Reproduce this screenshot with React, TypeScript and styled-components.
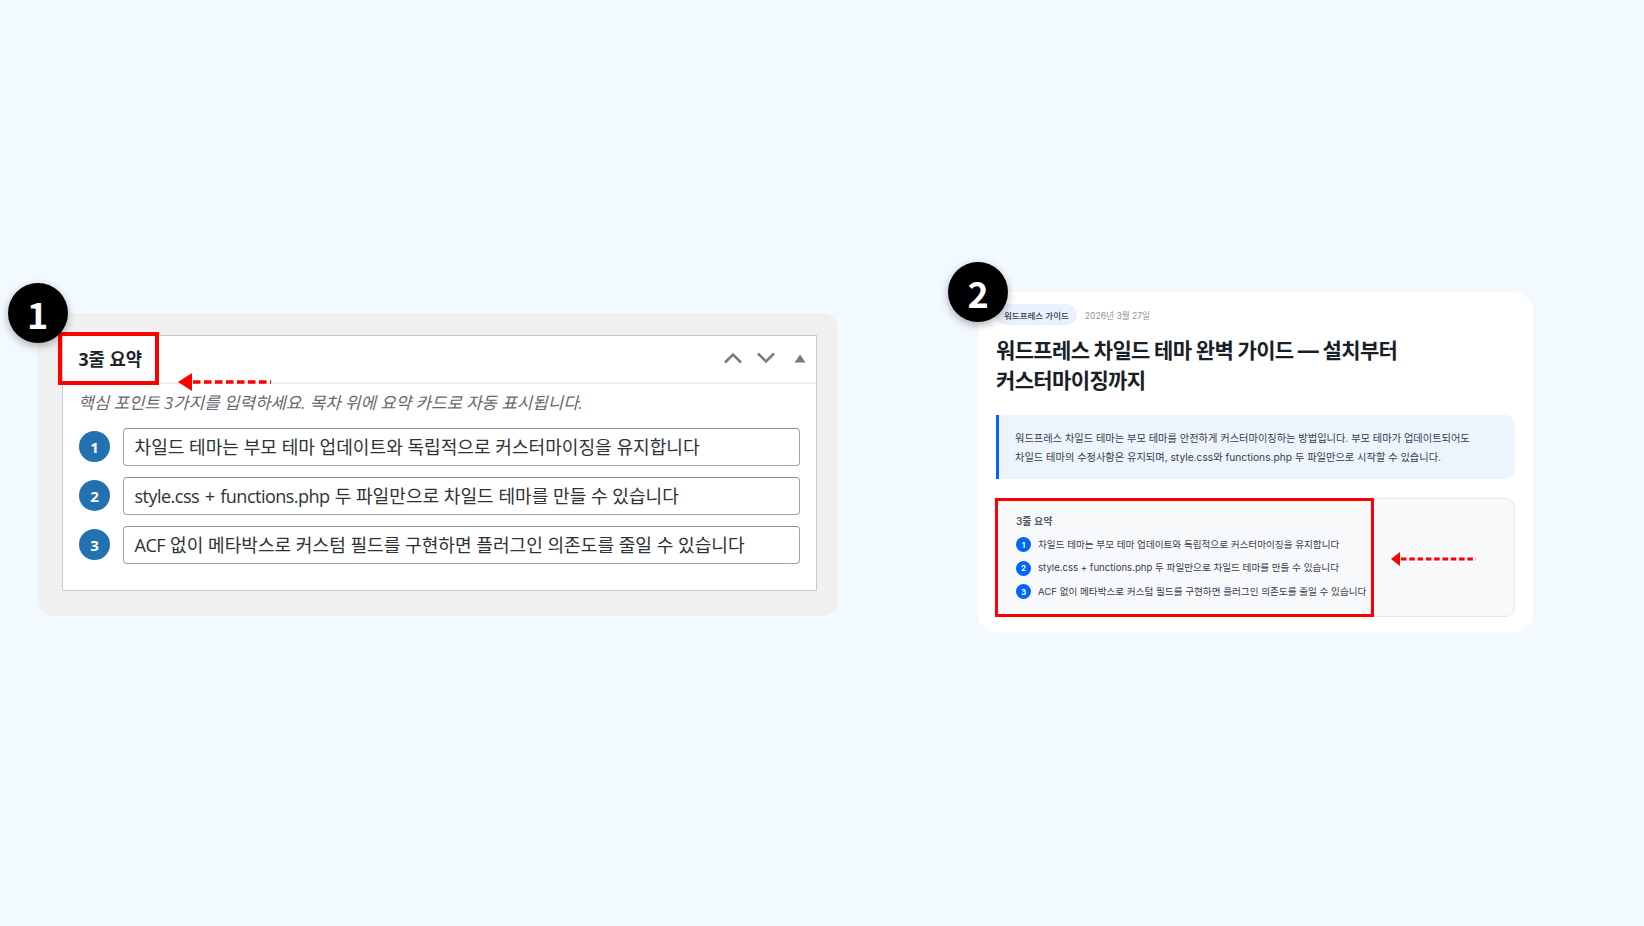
import React from "react";
import styled, { createGlobalStyle } from "styled-components";

const Global = createGlobalStyle`
  html, body { margin: 0; padding: 0; background: #f2f9ff; }
  * { box-sizing: border-box; }
`;

const Page = styled.div`
  width: 1644px;
  height: 926px;
  overflow: hidden;
  display: flex;
  align-items: flex-start;
  padding: 292px 0 0 38px;
  gap: 140px;
`;

const Figure = styled.section<{ $top?: number }>`
  position: relative;
  margin-top: ${(p) => p.$top ?? 0}px;
`;

const Marker = styled.div<{ $left: number; $top: number }>`
  position: absolute;
  left: ${(p) => p.$left}px;
  top: ${(p) => p.$top}px;
  width: 60px;
  height: 60px;
  border-radius: 50%;
  background: #000;
  color: #fff;
  display: flex;
  align-items: center;
  justify-content: center;
  font: 700 36px "Noto Sans CJK KR", "Noto Sans", sans-serif;
  box-shadow: 0 3px 8px rgba(0, 0, 0, 0.3);
  z-index: 3;
`;

const Highlight = styled.div<{ $left: number; $top: number; $w: number; $h: number; $b: number }>`
  position: absolute;
  left: ${(p) => p.$left}px;
  top: ${(p) => p.$top}px;
  width: ${(p) => p.$w}px;
  height: ${(p) => p.$h}px;
  border: ${(p) => p.$b}px solid #f00;
  z-index: 2;
`;

const ArrowSvg = styled.svg<{ $left: number; $top: number }>`
  position: absolute;
  left: ${(p) => p.$left}px;
  top: ${(p) => p.$top}px;
  z-index: 2;
`;

type ArrowProps = { left: number; top: number; w: number; headW: number; headH: number; dash: string; thick: number };

const Arrow = ({ left, top, w, headW, headH, dash, thick }: ArrowProps) => (
  <ArrowSvg $left={left} $top={top} width={w} height={headH} viewBox={`0 0 ${w} ${headH}`}>
    <path d={`M0 ${headH / 2} L${headW} 0 V${headH} Z`} fill="#f00" />
    <line x1={headW + 1} y1={headH / 2} x2={w} y2={headH / 2} stroke="#f00" strokeWidth={thick} strokeDasharray={dash} />
  </ArrowSvg>
);

/* ---------- left: editor metabox ---------- */

const GreyPanel = styled.div`
  width: 800px;
  height: 303px;
  background: #f0f0f0;
  border-radius: 16px;
  padding: 22px 21px 26px 24px;
`;

const MetaBox = styled.div`
  height: 256px;
  background: #fff;
  border: 1px solid #c8cacd;
`;

const MetaHeader = styled.header`
  height: 47.5px;
  display: flex;
  align-items: center;
  justify-content: space-between;
  padding: 2px 10px 0 15.5px;
  border-bottom: 2px solid #f0f0f0;
`;

const MetaTitle = styled.h2`
  margin: 0;
  font: 700 17.7px/1 "Open Sans", "Noto Sans CJK KR", sans-serif;
  color: #1d2327;
`;

const Controls = styled.div`
  display: flex;
  align-items: center;
  gap: 15px;
  margin-top: -3px;
`;

const Triangle = styled.svg`
  margin-left: 4px;
`;

const MetaBody = styled.div`
  padding: 6px 16px 0;
`;

const Hint = styled.p`
  margin: 0 0 12px -0.8px;
  height: 26px;
  font: italic 400 16.8px/26px "Open Sans", "Noto Sans CJK KR", sans-serif;
  color: #646970;
`;

const Rows = styled.div`
  display: flex;
  flex-direction: column;
  gap: 11px;
`;

const Row = styled.div`
  display: flex;
  align-items: center;
  gap: 13px;
`;

const NumDot = styled.span`
  flex: none;
  width: 31px;
  height: 31px;
  border-radius: 50%;
  background: #2271b1;
  color: #fff;
  display: flex;
  align-items: center;
  justify-content: center;
  font: 700 15px "Open Sans", sans-serif;
`;

const Field = styled.div`
  flex: none;
  width: 677px;
  height: 38px;
  border: 1px solid #a0a3a8;
  border-top-color: #8c8f94;
  border-radius: 4px;
  padding: 2px 10.5px 0;
  display: flex;
  align-items: center;
  gap: 0.28em;
  font: 400 18.08px/1 "Open Sans", "Noto Sans CJK KR", sans-serif;
  color: #2c3338;
  white-space: nowrap;
`;

const Latin = styled.span`
  letter-spacing: -0.55px;
  word-spacing: 1.6px;
`;

/* ---------- right: rendered post ---------- */

const PostCard = styled.article`
  width: 555px;
  height: 340px;
  background: #fff;
  border-radius: 18px;
  padding: 12px 18px 15px 18px;
  font-family: "Inter", "Noto Sans CJK KR", sans-serif;
`;

const MetaLine = styled.div`
  display: flex;
  align-items: center;
  gap: 8px;
`;

const Tag = styled.span`
  height: 21px;
  padding: 0 8px;
  border-radius: 11px;
  background: #e8f1fd;
  color: #333d4b;
  font-size: 8.5px;
  font-weight: 500;
  display: flex;
  align-items: center;
`;

const DateText = styled.span`
  font-size: 8.6px;
  color: #8b95a1;
`;

const PostTitle = styled.h1`
  margin: 11px 0 19px;
  width: 430px;
  font-size: 21px;
  line-height: 30px;
  font-weight: 700;
  letter-spacing: -0.64px;
  word-break: keep-all;
  color: #191f28;
`;

const Lead = styled.div`
  height: 64px;
  background: #edf4fe;
  border-left: 3px solid #0064ff;
  border-radius: 0 10px 10px 0;
  padding: 14px 16px;
  font-size: 10.22px;
  line-height: 18.5px;
  color: #333d4b;
`;

const Summary = styled.div`
  margin-top: 19px;
  height: 119px;
  background: #f8f9fb;
  border: 1px solid #e5e8eb;
  border-radius: 10px;
  padding: 15px 19px;
`;

const SummaryTitle = styled.div`
  font-size: 10px;
  line-height: 14px;
  font-weight: 600;
  color: #4e5968;
  margin-bottom: 8px;
`;

const SummaryRow = styled.div`
  display: flex;
  align-items: center;
  gap: 7px;
  height: 15px;
  margin-bottom: 8.5px;
  font-size: 9.6px;
  color: #333d4b;
  white-space: nowrap;
`;

const SmallDot = styled.span`
  flex: none;
  width: 15px;
  height: 15px;
  margin-top: 2px;
  border-radius: 50%;
  background: #0064ff;
  color: #fff;
  display: flex;
  align-items: center;
  justify-content: center;
  font-size: 8px;
  font-weight: 700;
`;

const points = [
  "차일드 테마는 부모 테마 업데이트와 독립적으로 커스터마이징을 유지합니다",
  "style.css + functions.php 두 파일만으로 차일드 테마를 만들 수 있습니다",
  "ACF 없이 메타박스로 커스텀 필드를 구현하면 플러그인 의존도를 줄일 수 있습니다",
];

const fieldContent = [
  <span>차일드 테마는 부모 테마 업데이트와 독립적으로 커스터마이징을 유지합니다</span>,
  <>
    <Latin>style.css + functions.php</Latin>
    <span>두 파일만으로 차일드 테마를 만들 수 있습니다</span>
  </>,
  <>
    <Latin>ACF</Latin>
    <span>없이 메타박스로 커스텀 필드를 구현하면 플러그인 의존도를 줄일 수 있습니다</span>
  </>,
];

export default function App() {
  return (
    <>
      <Global />
      <Page>
        <Figure $top={21}>
          <GreyPanel>
            <MetaBox>
              <MetaHeader>
                <MetaTitle>3줄 요약</MetaTitle>
                <Controls>
                  <svg width="18" height="12" viewBox="0 0 18 12">
                    <path d="M1 10.5 L9 2.5 L17 10.5" fill="none" stroke="#787c82" strokeWidth="2.6" />
                  </svg>
                  <svg width="18" height="12" viewBox="0 0 18 12">
                    <path d="M1 1.5 L9 9.5 L17 1.5" fill="none" stroke="#787c82" strokeWidth="2.6" />
                  </svg>
                  <Triangle width="12" height="9" viewBox="0 0 12 9">
                    <path d="M6 0.5 L11.5 8.5 H0.5 Z" fill="#787c82" />
                  </Triangle>
                </Controls>
              </MetaHeader>
              <MetaBody>
                <Hint>핵심 포인트 3가지를 입력하세요. 목차 위에 요약 카드로 자동 표시됩니다.</Hint>
                <Rows>
                  {fieldContent.map((c, i) => (
                    <Row key={i}>
                      <NumDot>{i + 1}</NumDot>
                      <Field>{c}</Field>
                    </Row>
                  ))}
                </Rows>
              </MetaBody>
            </MetaBox>
          </GreyPanel>
          <Marker $left={-30.5} $top={-30}>1</Marker>
          <Highlight $left={20} $top={19} $w={101} $h={53} $b={4} />
          <Arrow left={140} top={60} w={93} headW={14} headH={18} dash="7.5 3.5" thick={3.4} />
        </Figure>

        <Figure>
          <PostCard>
            <MetaLine>
              <Tag>워드프레스 가이드</Tag>
              <DateText>2026년 3월 27일</DateText>
            </MetaLine>
            <PostTitle>워드프레스 차일드 테마 완벽 가이드 — 설치부터 커스터마이징까지</PostTitle>
            <Lead>
              워드프레스 차일드 테마는 부모 테마를 안전하게 커스터마이징하는 방법입니다. 부모 테마가 업데이트되어도
              <br />
              차일드 테마의 수정사항은 유지되며, style.css와 functions.php 두 파일만으로 시작할 수 있습니다.
            </Lead>
            <Summary>
              <SummaryTitle>3줄 요약</SummaryTitle>
              {points.map((p, i) => (
                <SummaryRow key={i}>
                  <SmallDot>{i + 1}</SmallDot>
                  {p}
                </SummaryRow>
              ))}
            </Summary>
          </PostCard>
          <Marker $left={-30} $top={-30}>2</Marker>
          <Highlight $left={17} $top={206} $w={379} $h={119} $b={3} />
          <Arrow left={413} top={260} w={85} headW={9} headH={14} dash="5.5 2.8" thick={3} />
        </Figure>
      </Page>
    </>
  );
}
